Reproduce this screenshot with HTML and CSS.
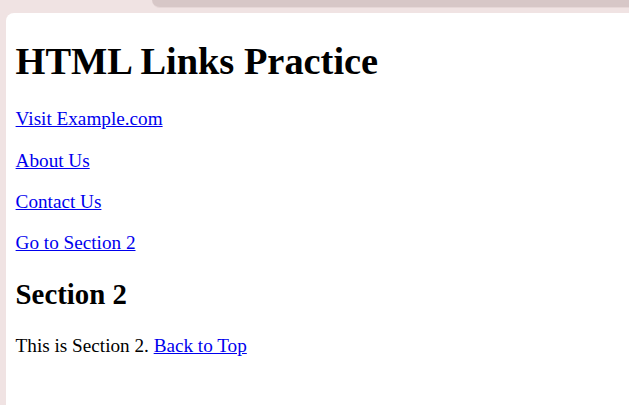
FILE: index.html
```html
<!DOCTYPE html>
<html>
<head>
<meta charset="utf-8">
<title>HTML Links Practice</title>
<link rel="stylesheet" href="styles.css">
</head>
<body>
<div class="chrome">
  <div class="tabbar"></div>
</div>
<main class="page" id="top">
  <h1>HTML Links Practice</h1>
  <p><a href="#">Visit Example.com</a></p>
  <p><a href="#">About Us</a></p>
  <p><a href="#">Contact Us</a></p>
  <p><a href="#section2">Go to Section 2</a></p>
  <h2 id="section2">Section 2</h2>
  <p>This is Section 2. <a href="#top">Back to Top</a></p>
</main>
</body>
</html>
```
FILE: styles.css
```css
html, body {
  margin: 0;
  height: 100%;
}
body {
  background: #f0e3e3;
  display: flex;
  flex-direction: column;
  overflow: hidden;
}
.chrome {
  height: 13px;
  flex: none;
  display: flex;
  justify-content: flex-end;
}
.tabbar {
  width: 477px;
  height: 7px;
  background: #d7c7c7;
  border-bottom-left-radius: 10px;
  border-bottom: 1px solid #e6d7d7;
}
.page {
  flex: 1;
  display: flow-root;
  margin-left: 6px;
  padding: 0 10px 0 9.6px;
  background: #ffffff;
  border-top-left-radius: 8px;
  font-family: "Liberation Serif", "Times New Roman", serif;
  font-size: 19.2px;
  color: #000;
}
.page a {
  color: #0000ee;
}
.page h1 {
  font-size: 2em;
  margin: 0.67em 0;
}
.page h2 {
  font-size: 1.5em;
  margin: 0.83em 0;
}
.page p {
  margin: 1em 0;
}
```
